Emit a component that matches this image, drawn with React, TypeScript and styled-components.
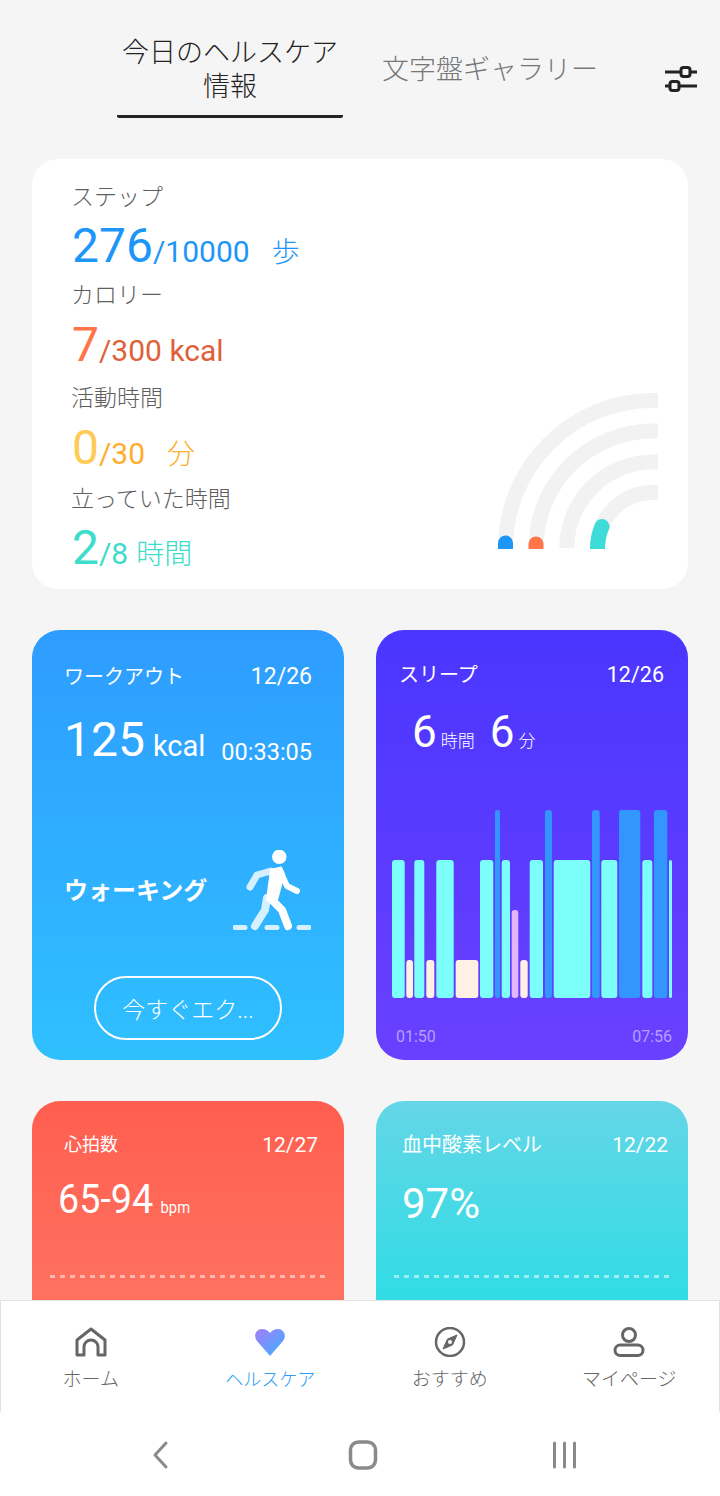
import React from "react";
import styled, { createGlobalStyle } from "styled-components";

const GlobalStyle = createGlobalStyle`
  html, body {
    margin: 0;
    padding: 0;
    background: #f5f5f6;
    font-family: Roboto, "Noto Sans CJK JP", sans-serif;
  }
  * { box-sizing: border-box; }
`;

const Screen = styled.div`
  width: 720px;
  height: 1496px;
  display: flex;
  flex-direction: column;
  overflow: hidden;
  background: #f5f5f6;
`;

const Scroll = styled.div`
  flex: 1;
  min-height: 0;
  overflow: hidden;
`;

const TabBar = styled.div`
  height: 159px;
  padding: 34px 23px 0 117px;
  display: flex;
  align-items: flex-start;
`;

const Tab = styled.div`
  width: 226px;
  height: 84px;
  text-align: center;
  font-size: 27px;
  font-weight: 300;
  line-height: 34px;
  padding-top: 2px;
  color: #222;
  border-bottom: 3px solid #222;
  border-radius: 0 0 2px 2px;
`;

const PlainTab = styled.div`
  margin: 19px 0 0 39px;
  font-size: 27px;
  font-weight: 300;
  line-height: 34px;
  color: #777;
  white-space: nowrap;
`;

const FilterButton = styled.div`
  margin: 29px 0 0 auto;
  width: 32px;
  height: 32px;
  display: flex;
`;

const SummaryCard = styled.section`
  margin: 0 32px;
  height: 430px;
  padding: 22px 39px 0;
  background: #fff;
  border-radius: 26px;
  position: relative;
`;

const StatLabel = styled.div`
  font-size: 23px;
  font-weight: 300;
  line-height: 34px;
  color: #5e5e5e;
`;

const StatValue = styled.div<{ $color: string; $height: number; $line: number }>`
  height: ${(p) => p.$height}px;
  line-height: ${(p) => p.$line}px;
  margin-left: 1px;
  color: ${(p) => p.$color};
  font-size: 30px;
  white-space: nowrap;
`;

const BigNumber = styled.span<{ $color: string }>`
  font-size: 48px;
  color: ${(p) => p.$color};
`;

const Unit = styled.span<{ $gap: number }>`
  margin-left: ${(p) => p.$gap}px;
  font-size: 28px;
  font-weight: 300;
`;

const Rings = styled.svg`
  position: absolute;
  right: 30px;
  bottom: 40px;
`;

const CardGrid = styled.div`
  margin: 41px 32px 0;
  display: grid;
  grid-template-columns: 312px 312px;
  column-gap: 32px;
  row-gap: 41px;
`;

const Card = styled.section<{ $from: string; $to: string; $height: number; $stop?: number }>`
  height: ${(p) => p.$height}px;
  border-radius: 28px;
  color: #fff;
  background: linear-gradient(${(p) => p.$from}, ${(p) => p.$to} ${(p) => p.$stop ?? 100}%);
  display: flex;
  flex-direction: column;
`;

const CardHead = styled.div<{ $left: number; $right: number; $top: number }>`
  padding: ${(p) => p.$top}px ${(p) => p.$right}px 0 ${(p) => p.$left}px;
  display: flex;
  justify-content: space-between;
  align-items: center;
`;

const CardTitle = styled.span<{ $size: number }>`
  font-size: ${(p) => p.$size}px;
  line-height: 30px;
`;

const CardDate = styled.span<{ $size: number }>`
  font-size: ${(p) => p.$size}px;
  line-height: 30px;
`;

const WorkoutRow = styled.div`
  margin-top: 18px;
  padding: 0 32px;
  display: flex;
  align-items: flex-end;
  justify-content: space-between;
`;

const WorkoutCalories = styled.span`
  font-size: 48px;
  line-height: 60px;

  small {
    margin-left: 8px;
    font-size: 29px;
  }
`;

const WorkoutTime = styled.span`
  font-size: 23.5px;
  line-height: 30px;
  margin-bottom: 9px;
`;

const ActivityRow = styled.div`
  margin-top: 74px;
  padding: 0 33px 0 32px;
  height: 82px;
  display: flex;
  align-items: center;
  justify-content: space-between;
`;

const ActivityName = styled.span`
  font-size: 24px;
  font-weight: 700;
  margin-top: -6px;
`;

const StartButton = styled.div`
  align-self: center;
  margin-top: 44px;
  width: 188px;
  height: 64px;
  border: 2px solid #fff;
  border-radius: 32px;
  display: flex;
  align-items: center;
  justify-content: center;
  font-size: 23px;
  font-weight: 300;
`;

const SleepRow = styled.div`
  margin: 12px 0 0 36px;
  display: flex;
  align-items: baseline;
  height: 60px;
  line-height: 60px;
`;

const SleepNumber = styled.span`
  font-size: 44px;
  margin-right: 4px;
`;

const SleepUnit = styled.span`
  font-size: 17px;
  font-weight: 300;
  margin-right: 15px;
`;

const SleepChart = styled.svg`
  display: block;
  margin-top: 48px;
  flex: none;
`;

const SleepAxis = styled.div`
  margin-top: 28px;
  padding: 0 16px 0 20px;
  display: flex;
  justify-content: space-between;
  font-size: 16px;
  line-height: 22px;
  color: rgba(255, 255, 255, 0.5);
`;

const Reading = styled.div<{ $squeeze?: boolean; $shift?: number; $size: number }>`
  margin: 14px 0 0 26px;
  height: 50px;
  padding-top: ${(p) => p.$shift ?? 0}px;
  font-size: ${(p) => p.$size}px;
  line-height: 50px;
  transform: scaleX(${(p) => (p.$squeeze ? 0.92 : 1)});
  transform-origin: left center;

  small {
    margin-left: 8px;
    font-size: 16px;
  }
`;

const DottedLine = styled.div`
  margin: 51px 0 0 18px;
  width: 276px;
  height: 3px;
  background: repeating-linear-gradient(
    90deg,
    rgba(255, 255, 255, 0.5) 0 5px,
    transparent 5px 10px
  );
`;

const BottomNav = styled.nav`
  flex: none;
  height: 112px;
  background: #fff;
  border: 1px solid #e2e2e2;
  border-bottom: none;
  display: grid;
  grid-template-columns: repeat(4, 1fr);
`;

const NavItem = styled.div<{ $active?: boolean }>`
  display: flex;
  flex-direction: column;
  align-items: center;
  padding-top: 26px;
  font-size: ${(p) => (p.$active ? 18 : 19)}px;
  font-weight: 300;
  line-height: 28px;
  color: ${(p) => (p.$active ? "#2e9bf0" : "#666")};

  svg {
    display: block;
    margin-bottom: 9px;
  }
`;

const SystemBar = styled.div`
  flex: none;
  height: 84px;
  background: #fff;
  display: grid;
  grid-template-columns: repeat(3, 201px);
  justify-content: center;
  justify-items: center;
  padding: 28px 0 0 5px;
`;

const stats = [
  { label: "ステップ", big: "276", rest: "/10000", unit: "歩", gap: 22, bigColor: "#1e96f7", color: "#1e96f7", height: 64, line: 62 },
  { label: "カロリー", big: "7", rest: "/300 kcal", unit: "", gap: 0, bigColor: "#ff7549", color: "#e0603a", height: 69, line: 64 },
  { label: "活動時間", big: "0", rest: "/30", unit: "分", gap: 22, bigColor: "#ffcb57", color: "#ffae2b", height: 67, line: 63 },
  { label: "立っていた時間", big: "2", rest: "/8", unit: "時間", gap: 8, bigColor: "#3ddccb", color: "#3ddccb", height: 64, line: 62 },
];

// x, width pairs for each sleep stage, in chart coordinates
const awake: number[][] = [[119, 5], [169, 7], [216, 7.7], [243, 21.3], [278, 13.3]];
const rem: number[][] = [[135.7, 6.6]];
const light: number[][] = [[16, 12.7], [38.3, 10], [60.3, 17.4], [104, 13.3], [125.7, 8.3], [153.7, 13.3], [177.7, 36.6], [225.3, 16], [266.3, 10], [293, 3]];
const deep: number[][] = [[30.3, 6.7], [50.3, 8], [79.7, 22.6], [144.3, 7.4]];

const Bars: React.FC<{ items: number[][]; top: number; fill: string }> = ({ items, top, fill }) => (
  <>
    {items.map(([x, w]) => (
      <rect key={x} x={x} y={top} width={w} height={188 - top} rx={Math.min(w / 2, 3)} fill={fill} />
    ))}
  </>
);

const WalkerIcon = () => (
  <svg width="78" height="82" viewBox="0 0 78 82" fill="none" strokeLinecap="round" strokeLinejoin="round">
    <g stroke="#fff" strokeOpacity="0.8">
      <path d="M38 21L24 25L17 37" strokeWidth="7" />
      <path d="M34 48L32 60L22 76" strokeWidth="8" />
      <path d="M2 77.5H12M34 77.5H44M66 77.5H76" strokeWidth="5" />
    </g>
    <circle cx="46.3" cy="6.8" r="7.2" fill="#fff" />
    <path d="M38 20L48 17.5L51 24L44 50H34Z" fill="#fff" stroke="#fff" strokeWidth="2" />
    <g stroke="#fff">
      <path d="M48 23L54 36L64 41" strokeWidth="6" />
      <path d="M38 49L49 60L55 76" strokeWidth="8" />
    </g>
  </svg>
);

export default function App() {
  return (
    <Screen>
      <GlobalStyle />
      <Scroll>
        <TabBar>
          <Tab>今日のヘルスケア<br />情報</Tab>
          <PlainTab>文字盤ギャラリー</PlainTab>
          <FilterButton>
            <svg width="32" height="32" viewBox="0 0 32 32" fill="none" stroke="#222" strokeWidth="3">
              <path d="M0 9H16M25 9H32M0 23H5M14 23H32" />
              <rect x="16" y="4.5" width="9" height="9" rx="2.5" />
              <rect x="5" y="18.5" width="9" height="9" rx="2.5" />
            </svg>
          </FilterButton>
        </TabBar>

        <SummaryCard>
          {stats.map((s) => (
            <div key={s.label}>
              <StatLabel>{s.label}</StatLabel>
              <StatValue $color={s.color} $height={s.height} $line={s.line}>
                <BigNumber $color={s.bigColor}>{s.big}</BigNumber>
                {s.rest}
                {s.unit && <Unit $gap={s.gap}>{s.unit}</Unit>}
              </StatValue>
            </div>
          ))}
          <Rings width="168" height="162" viewBox="490 388 168 162">
            <g fill="none" stroke="#f2f2f2" strokeWidth="15">
              <path d="M505.5 549A147.5 147.5 0 0 1 653 401.5H658" />
              <path d="M536 549A117 117 0 0 1 653 432H658" />
              <path d="M566.7 549A86.3 86.3 0 0 1 653 463H658" />
              <path d="M597.5 549A55.5 55.5 0 0 1 653 493.5H658" />
            </g>
            <g fill="none" strokeWidth="15" strokeLinecap="round">
              <path d="M505.5 560V544" stroke="#1e96f7" />
              <path d="M536 560V545" stroke="#ff7549" />
              <path d="M597.5 560V549A55.5 55.5 0 0 1 602 527.5" stroke="#3ddcd8" />
            </g>
          </Rings>
        </SummaryCard>

        <CardGrid>
          <Card $from="#2e9cff" $to="#2fc0ff" $height={430}>
            <CardHead $left={32} $right={32} $top={32}>
              <CardTitle $size={20}>ワークアウト</CardTitle>
              <CardDate $size={23}>12/26</CardDate>
            </CardHead>
            <WorkoutRow>
              <WorkoutCalories>125<small>kcal</small></WorkoutCalories>
              <WorkoutTime>00:33:05</WorkoutTime>
            </WorkoutRow>
            <ActivityRow>
              <ActivityName>ウォーキング</ActivityName>
              <WalkerIcon />
            </ActivityRow>
            <StartButton>今すぐエク...</StartButton>
          </Card>

          <Card $from="#4a36ff" $to="#6a40ff" $height={430}>
            <CardHead $left={23} $right={24} $top={30}>
              <CardTitle $size={20}>スリープ</CardTitle>
              <CardDate $size={21.5}>12/26</CardDate>
            </CardHead>
            <SleepRow>
              <SleepNumber>6</SleepNumber>
              <SleepUnit>時間</SleepUnit>
              <SleepNumber>6</SleepNumber>
              <SleepUnit>分</SleepUnit>
            </SleepRow>
            <SleepChart width="312" height="188" viewBox="0 0 312 188">
              <Bars items={light} top={50} fill="#7cfffa" />
              <Bars items={deep} top={150} fill="#fff0e4" />
              <Bars items={rem} top={100} fill="#e3b5ff" />
              <Bars items={awake} top={0} fill="#3396ff" />
            </SleepChart>
            <SleepAxis>
              <span>01:50</span>
              <span>07:56</span>
            </SleepAxis>
          </Card>

          <Card $from="#ff5e4f" $to="#ff7260" $height={300} $stop={67}>
            <CardHead $left={32} $right={26} $top={29}>
              <CardTitle $size={18}>心拍数</CardTitle>
              <CardDate $size={21}>12/27</CardDate>
            </CardHead>
            <Reading $squeeze $size={41}>65-94<small>bpm</small></Reading>
            <DottedLine />
          </Card>

          <Card $from="#64d6e7" $to="#30dce5" $height={300} $stop={67}>
            <CardHead $left={26} $right={20} $top={29}>
              <CardTitle $size={20}>血中酸素レベル</CardTitle>
              <CardDate $size={21}>12/22</CardDate>
            </CardHead>
            <Reading $shift={5} $size={42}>97%</Reading>
            <DottedLine />
          </Card>
        </CardGrid>
      </Scroll>

      <BottomNav>
        <NavItem>
          <svg width="32" height="30" viewBox="0 0 32 30" fill="none" stroke="#666" strokeWidth="3" strokeLinejoin="round">
            <path d="M16 2L30 13V28H23V20A7 7 0 0 0 9 20V28H2V13Z" />
          </svg>
          ホーム
        </NavItem>
        <NavItem $active>
          <svg width="32" height="30" viewBox="0 0 32 30">
            <defs>
              <linearGradient id="heartFill" x1="0" y1="0" x2="1" y2="1">
                <stop offset="0" stopColor="#a57cf8" />
                <stop offset="1" stopColor="#3cb2ff" />
              </linearGradient>
            </defs>
            <path d="M16 29L3 14C-1 9 2 2 8 2C11.5 2 14.5 4 16 6C17.5 4 20.5 2 24 2C30 2 33 9 29 14Z" fill="url(#heartFill)" />
          </svg>
          ヘルスケア
        </NavItem>
        <NavItem>
          <svg width="32" height="30" viewBox="0 0 32 30" fill="none" stroke="#666" strokeWidth="2.5">
            <circle cx="16" cy="15" r="14" />
            <path d="M23 8L18.5 18L9 22L13.5 12Z" fill="#666" strokeWidth="1" strokeLinejoin="round" />
            <circle cx="16" cy="15" r="2" fill="#fff" stroke="none" />
          </svg>
          おすすめ
        </NavItem>
        <NavItem>
          <svg width="32" height="30" viewBox="0 0 32 30" fill="none" stroke="#666" strokeWidth="3">
            <circle cx="16" cy="8" r="6.5" />
            <rect x="2" y="18" width="28" height="10.5" rx="5.25" />
          </svg>
          マイページ
        </NavItem>
      </BottomNav>

      <SystemBar>
        <svg width="20" height="30" viewBox="0 0 20 30" fill="none" stroke="#8a8a8a" strokeWidth="3" strokeLinecap="round" strokeLinejoin="round">
          <path d="M14 3L3 15L14 27" />
        </svg>
        <svg width="30" height="30" viewBox="0 0 30 30" fill="none" stroke="#8a8a8a" strokeWidth="3.5">
          <rect x="2.5" y="2" width="25" height="26" rx="8" />
        </svg>
        <svg width="30" height="30" viewBox="0 0 30 30" fill="none" stroke="#8a8a8a" strokeWidth="3" strokeLinecap="round">
          <path d="M5.5 3V27M15.5 3V27M25.5 3V27" />
        </svg>
      </SystemBar>
    </Screen>
  );
}
